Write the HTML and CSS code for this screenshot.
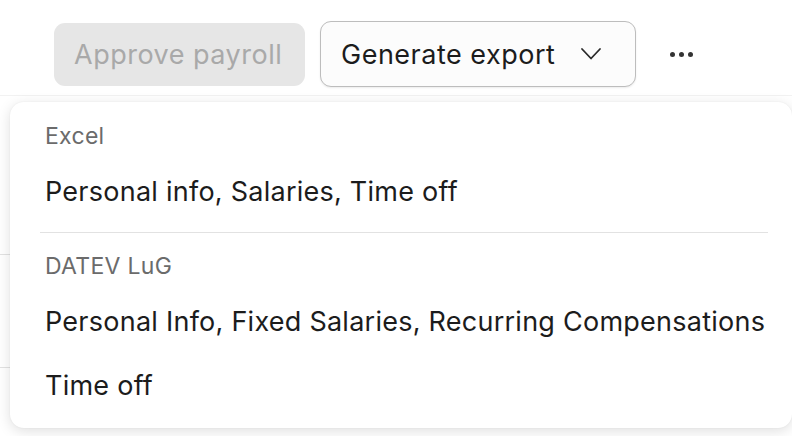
FILE: index.html
```html
<!DOCTYPE html>
<html lang="en">

<head>
    <meta charset="UTF-8">
    <meta name="viewport" content="width=device-width, initial-scale=1.0">
    <title>Payroll export</title>
    <link rel="stylesheet" href="styles.css">
</head>

<body>
    <div class="page">
        <div class="toolbar">
            <button class="btn btn_disabled" disabled>Approve payroll</button>
            <button class="btn btn_outline">
                Generate export
                <svg width="22" height="22" viewBox="0 0 22 22" fill="none">
                    <path d="M2 6l9 9.5 9-9.5" stroke="#2a2a2a" stroke-width="1.8" stroke-linecap="round" stroke-linejoin="round" />
                </svg>
            </button>
            <button class="more" aria-label="More">
                <span></span><span></span><span></span>
            </button>
        </div>

        <div class="table">
            <div class="row"></div>
            <div class="row"></div>
        </div>

        <div class="menu">
            <div class="menu_label">Excel</div>
            <div class="menu_item">Personal info, Salaries, Time off</div>
            <div class="menu_divider"></div>
            <div class="menu_label">DATEV LuG</div>
            <div class="menu_item">Personal Info, Fixed Salaries, Recurring Compensations</div>
            <div class="menu_item">Time off</div>
        </div>
    </div>
</body>

</html>
```

FILE: styles.css
```css
html,
body {
    margin: 0;
    padding: 0;
}

body {
    background: #ffffff;
    font-family: Inter, "Noto Sans", sans-serif;
    color: #1c1c1c;
    overflow: hidden;
}

.page {
    position: relative;
    height: 436px;
    overflow: hidden;
}

.toolbar {
    display: flex;
    align-items: center;
    padding: 21px 0 0 54px;
    height: 66px;
}

.btn {
    font-family: inherit;
    font-size: 27px;
    letter-spacing: 0.5px;
    border-radius: 11px;
    padding: 0 20px;
    display: flex;
    align-items: center;
    box-sizing: border-box;
}

.btn_disabled {
    background: #e6e6e6;
    color: #a9a9a9;
    border: none;
    width: 251px;
    height: 63px;
}

.btn_outline {
    background: #fcfcfc;
    color: #1c1c1c;
    border: 1.5px solid #bdbdbd;
    margin-left: 15px;
    height: 66px;
    width: 316px;
    gap: 25px;
    box-shadow: 0 1px 2px rgba(0, 0, 0, 0.08);
}

.more {
    background: none;
    border: none;
    display: flex;
    gap: 4px;
    margin-left: 34px;
    padding: 0;
}

.more span {
    width: 5px;
    height: 5px;
    border-radius: 50%;
    background: #333;
}

.table {
    margin-top: 8px;
    border-top: 1px solid #f2f2f2;
}

.table .row {
    height: 112px;
    border-bottom: 1px solid #e2e2e2;
}

.table .row:first-child {
    height: 158px;
}

.menu {
    position: absolute;
    left: 10px;
    top: 102px;
    width: 782px;
    box-sizing: border-box;
    background: #ffffff;
    border-radius: 14px;
    box-shadow: 0 3px 14px rgba(0, 0, 0, 0.13), 0 0 2px rgba(0, 0, 0, 0.06);
    padding: 10px 0 10px;
}

.menu_label {
    height: 48px;
    line-height: 48px;
    padding-left: 35px;
    font-size: 23px;
    letter-spacing: 0.3px;
    color: #6b6b6b;
}

.menu_item {
    height: 64px;
    line-height: 64px;
    padding-left: 35px;
    font-size: 27px;
    letter-spacing: 0.25px;
    color: #1c1c1c;
    white-space: nowrap;
}

.menu_divider {
    height: 1px;
    background: #e2e2e2;
    margin: 8px 24px 9px 30px;
}
```
